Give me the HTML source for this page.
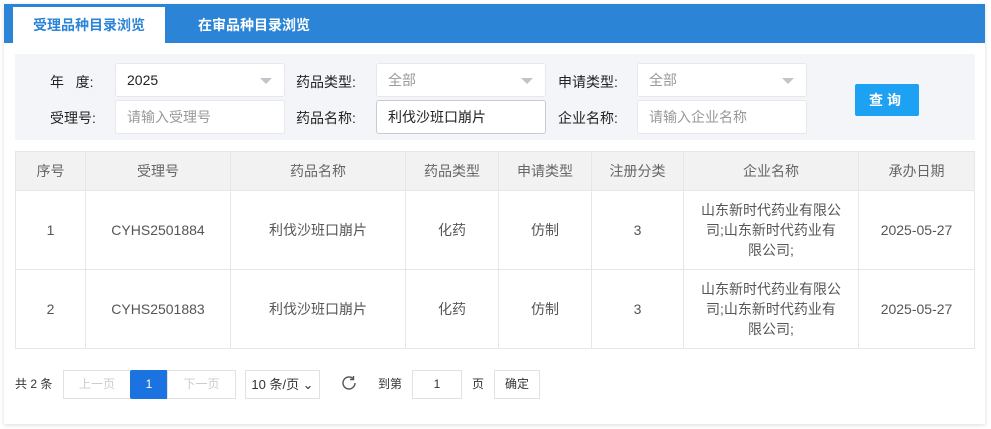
<!DOCTYPE html>
<html><head><meta charset="utf-8"><style>
*{box-sizing:border-box;margin:0;padding:0}
body{width:991px;height:429px;background:#fff;font-family:"Liberation Sans","Noto Sans CJK SC",sans-serif;font-size:14px;color:#333;position:relative;overflow:hidden}
.box{position:absolute;left:4px;top:4px;width:981px;height:420px;background:#fff;box-shadow:0 1px 4px rgba(0,0,0,.15)}
.tabs{position:absolute;left:4px;top:4px;width:981px;height:39px;background:#2b84d6}
.tab{position:absolute;top:3px;height:36px;line-height:36px;font-size:14px;text-align:center;color:#fff;font-weight:bold}
.t1{left:9px;width:152px;background:#fff;color:#2b84d6}
.t2{left:170px;width:160px}
.filter{position:absolute;left:15px;top:54px;width:960px;height:86px;background:#f3f5f8}
.lbl{position:absolute;font-size:14px;color:#222}
.inp{position:absolute;background:#fff;border:1px solid #e6e8eb;border-radius:3px;font-size:14px;color:#999;padding-left:11px;line-height:32px;height:34px}
.inp.v{color:#222}
.arr{position:absolute;right:12px;top:14px;width:0;height:0;border-left:6px solid transparent;border-right:6px solid transparent;border-top:6px solid #c0c4cc}
.btn{position:absolute;left:855px;top:84px;width:64px;height:32px;background:#1da1f2;color:#fff;border-radius:2px;text-align:center;line-height:32px;font-size:14px;letter-spacing:4px;font-weight:bold}
table{position:absolute;left:15px;top:151px;width:960px;border-collapse:collapse;font-size:14px;color:#555}
td,th{border:1px solid #e6e6e6;text-align:center;font-weight:normal}
th{background:#f2f2f2;height:39px;color:#666}
td{height:79px;line-height:20px}
.pg{position:absolute;top:370px;height:29px;border:1px solid #e2e2e2;font-size:12px;line-height:27px;text-align:center;color:#ccc;background:#fff}
.tx{position:absolute;top:370px;line-height:29px;font-size:12px;color:#333}
</style></head><body>
<div class="box"></div>
<div class="tabs"><div class="tab t1">受理品种目录浏览</div><div class="tab t2">在审品种目录浏览</div></div>
<div class="filter"></div>
<div class="lbl" style="left:50px;top:72px">年&nbsp;&nbsp;&nbsp;度:</div>
<div class="inp v" style="left:115px;top:63px;width:170px">2025<span class="arr"></span></div>
<div class="lbl" style="left:296px;top:72px">药品类型:</div>
<div class="inp" style="left:376px;top:63px;width:170px">全部<span class="arr"></span></div>
<div class="lbl" style="left:558px;top:72px">申请类型:</div>
<div class="inp" style="left:637px;top:63px;width:170px">全部<span class="arr"></span></div>
<div class="lbl" style="left:50px;top:108px">受理号:</div>
<div class="inp" style="left:115px;top:100px;width:170px">请输入受理号</div>
<div class="lbl" style="left:296px;top:108px">药品名称:</div>
<div class="inp v" style="left:376px;top:100px;width:170px;border-color:#c8ccd2">利伐沙班口崩片</div>
<div class="lbl" style="left:558px;top:108px">企业名称:</div>
<div class="inp" style="left:637px;top:100px;width:170px">请输入企业名称</div>
<div class="btn">查询</div>
<table>
<tr><th style="width:70px">序号</th><th style="width:145px">受理号</th><th style="width:175px">药品名称</th><th style="width:93px">药品类型</th><th style="width:93px">申请类型</th><th style="width:92px">注册分类</th><th style="width:175px">企业名称</th><th>承办日期</th></tr>
<tr><td>1</td><td>CYHS2501884</td><td>利伐沙班口崩片</td><td>化药</td><td>仿制</td><td>3</td><td style="padding:0 16px">山东新时代药业有限公司;山东新时代药业有限公司;</td><td>2025-05-27</td></tr>
<tr><td>2</td><td>CYHS2501883</td><td>利伐沙班口崩片</td><td>化药</td><td>仿制</td><td>3</td><td style="padding:0 16px">山东新时代药业有限公司;山东新时代药业有限公司;</td><td>2025-05-27</td></tr>
</table>
<div class="tx" style="left:15px">共 2 条</div>
<div class="pg" style="left:63px;width:68px">上一页</div>
<div class="pg" style="left:130px;width:38px;background:#1a73e0;border-color:#1a73e0;color:#fff;border-radius:2px">1</div>
<div class="pg" style="left:167px;width:69px">下一页</div>
<div class="pg" style="left:245px;width:75px;color:#333;font-size:13px">10 条/页 ⌄</div>
<svg style="position:absolute;left:340px;top:374px" width="18" height="18" viewBox="0 0 18 18"><path d="M15 9a6 6 0 1 1-2-4.5" fill="none" stroke="#555" stroke-width="1.4"/><path d="M13.5 2v3.5H10" fill="none" stroke="#555" stroke-width="1.4"/></svg>
<div class="tx" style="left:378px">到第</div>
<div class="pg" style="left:412px;width:50px;color:#333">1</div>
<div class="tx" style="left:472px">页</div>
<div class="pg" style="left:494px;width:46px;color:#333">确定</div>
</body></html>
